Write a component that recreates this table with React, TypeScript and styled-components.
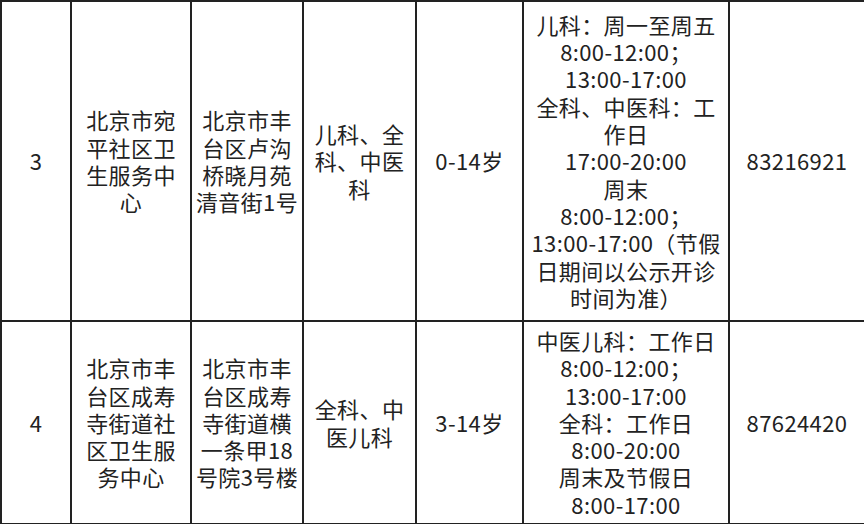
import styled, { createGlobalStyle } from "styled-components"

const GlobalStyle = createGlobalStyle`
    html, body {
        margin: 0;
        padding: 0;
        background: #ffffff;
    }
    body {
        font-family: "Noto Sans CJK SC", "Noto Sans", sans-serif;
        color: #222222;
    }
`

const Table = styled.table`
    width: 864px;
    border-collapse: collapse;
    table-layout: fixed;
`

const Row = styled.tr<{ $height: number }>`
    height: ${p => p.$height}px;
`

const Cell = styled.td`
    border: 2px solid #222222;
    padding: 0 2px;
    text-align: center;
    vertical-align: middle;
    font-size: 22px;
    line-height: 27.3px;
    letter-spacing: 0.4px;
`

const Line = styled.div`
    white-space: nowrap;
`

type Clinic = {
    no: string
    name: string[]
    addr: string[]
    dept: string[]
    age: string
    time: string[]
    phone: string
    height: number
}

const clinics: Clinic[] = [
    {
        no: "3",
        name: ["北京市宛", "平社区卫", "生服务中", "心"],
        addr: ["北京市丰", "台区卢沟", "桥晓月苑", "清音街1号"],
        dept: ["儿科、全", "科、中医", "科"],
        age: "0-14岁",
        time: [
            "儿科：周一至周五",
            "8:00-12:00；",
            "13:00-17:00",
            "全科、中医科：工",
            "作日",
            "17:00-20:00",
            "周末",
            "8:00-12:00；",
            "13:00-17:00（节假",
            "日期间以公示开诊",
            "时间为准）",
        ],
        phone: "83216921",
        height: 320,
    },
    {
        no: "4",
        name: ["北京市丰", "台区成寿", "寺街道社", "区卫生服", "务中心"],
        addr: ["北京市丰", "台区成寿", "寺街道横", "一条甲18", "号院3号楼"],
        dept: ["全科、中", "医儿科"],
        age: "3-14岁",
        time: [
            "中医儿科：工作日",
            "8:00-12:00；",
            "13:00-17:00",
            "全科：工作日",
            "8:00-20:00",
            "周末及节假日",
            "8:00-17:00",
        ],
        phone: "87624420",
        height: 203,
    },
]

const colWidths = [70, 120, 112, 113, 107, 206, 136]

function Lines({ items }: { items: string[] }) {
    return (
        <>
            {items.map((t, i) => (
                <Line key={i}>{t}</Line>
            ))}
        </>
    )
}

export default function App() {
    return (
        <>
            <GlobalStyle />
            <Table>
                <colgroup>
                    {colWidths.map((w, i) => (
                        <col key={i} style={{ width: w }} />
                    ))}
                </colgroup>
                <tbody>
                    {clinics.map(c => (
                        <Row key={c.no} $height={c.height}>
                            <Cell>{c.no}</Cell>
                            <Cell><Lines items={c.name} /></Cell>
                            <Cell><Lines items={c.addr} /></Cell>
                            <Cell><Lines items={c.dept} /></Cell>
                            <Cell>{c.age}</Cell>
                            <Cell><Lines items={c.time} /></Cell>
                            <Cell>{c.phone}</Cell>
                        </Row>
                    ))}
                </tbody>
            </Table>
        </>
    )
}
